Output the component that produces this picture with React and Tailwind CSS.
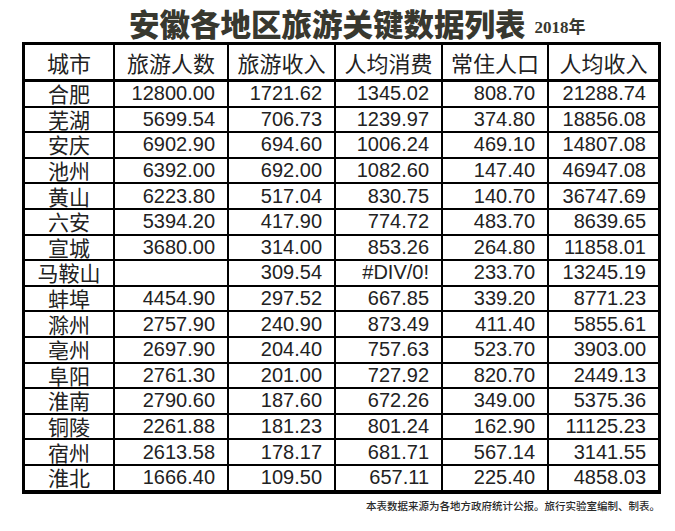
import React from "react";

const rows = [
  ["合肥", "12800.00", "1721.62", "1345.02", "808.70", "21288.74"],
  ["芜湖", "5699.54", "706.73", "1239.97", "374.80", "18856.08"],
  ["安庆", "6902.90", "694.60", "1006.24", "469.10", "14807.08"],
  ["池州", "6392.00", "692.00", "1082.60", "147.40", "46947.08"],
  ["黄山", "6223.80", "517.04", "830.75", "140.70", "36747.69"],
  ["六安", "5394.20", "417.90", "774.72", "483.70", "8639.65"],
  ["宣城", "3680.00", "314.00", "853.26", "264.80", "11858.01"],
  ["马鞍山", "", "309.54", "#DIV/0!", "233.70", "13245.19"],
  ["蚌埠", "4454.90", "297.52", "667.85", "339.20", "8771.23"],
  ["滁州", "2757.90", "240.90", "873.49", "411.40", "5855.61"],
  ["亳州", "2697.90", "204.40", "757.63", "523.70", "3903.00"],
  ["阜阳", "2761.30", "201.00", "727.92", "820.70", "2449.13"],
  ["淮南", "2790.60", "187.60", "672.26", "349.00", "5375.36"],
  ["铜陵", "2261.88", "181.23", "801.24", "162.90", "11125.23"],
  ["宿州", "2613.58", "178.17", "681.71", "567.14", "3141.55"],
  ["淮北", "1666.40", "109.50", "657.11", "225.40", "4858.03"],
];

const headers = ["城市", "旅游人数", "旅游收入", "人均消费", "常住人口", "人均收入"];

const cjk = { fontFamily: '"Noto Sans CJK SC", "Noto Sans", sans-serif' };
const num = { fontFamily: '"Liberation Sans", Arial, sans-serif' };

export default function App() {
  return (
    <div className="w-[675px] h-[531px] bg-white relative overflow-hidden">
      <div className="flex items-end h-[42px] pl-[129px] pb-[4px]">
        <span
          className="text-[30.5px] leading-none font-black text-[#38382f]"
          style={{ fontFamily: '"Noto Sans CJK SC", serif' }}
        >
          安徽各地区旅游关键数据列表
        </span>
        <span
          className="ml-[9px] mb-[2px] text-[17px] leading-none font-bold text-[#38382f]"
          style={{ fontFamily: '"Liberation Serif", "Noto Sans CJK SC", serif' }}
        >
          2018年
        </span>
      </div>

      <div className="ml-[22px] w-[639px] border-[3px] border-b-[4px] border-black bg-black">
        <div className="grid grid-cols-[88px_112px_105px_105px_104px_109px] gap-x-[2px] h-[34px]">
          {headers.map((h) => (
            <div
              key={h}
              className="bg-white flex items-center justify-center text-[22px] leading-[34px] text-[#222]"
              style={cjk}
            >
              {h}
            </div>
          ))}
        </div>
        <div className="h-[3px]" />
        <div className="grid grid-cols-[88px_112px_105px_105px_104px_109px] auto-rows-[23.6px] gap-x-[2px] gap-y-[2px]">
          {rows.map((r) =>
            r.map((c, i) =>
              i === 0 ? (
                <div
                  key={r[0] + i}
                  className="bg-white flex items-center justify-center whitespace-nowrap text-[21px] leading-[23px] text-[#222]"
                  style={cjk}
                >
                  {c}
                </div>
              ) : (
                <div
                  key={r[0] + i}
                  className="bg-white flex items-center justify-end pr-[12px] text-[20px] leading-[23px] text-[#222]"
                  style={num}
                >
                  {c}
                </div>
              )
            )
          )}
        </div>
      </div>

      <div className="flex justify-end pr-[15px] pt-[7px]">
        <span className="text-[10.5px] leading-none text-[#2a2a2a] font-medium" style={cjk}>
          本表数据来源为各地方政府统计公报。旅行实验室编制、制表。
        </span>
      </div>
    </div>
  );
}
